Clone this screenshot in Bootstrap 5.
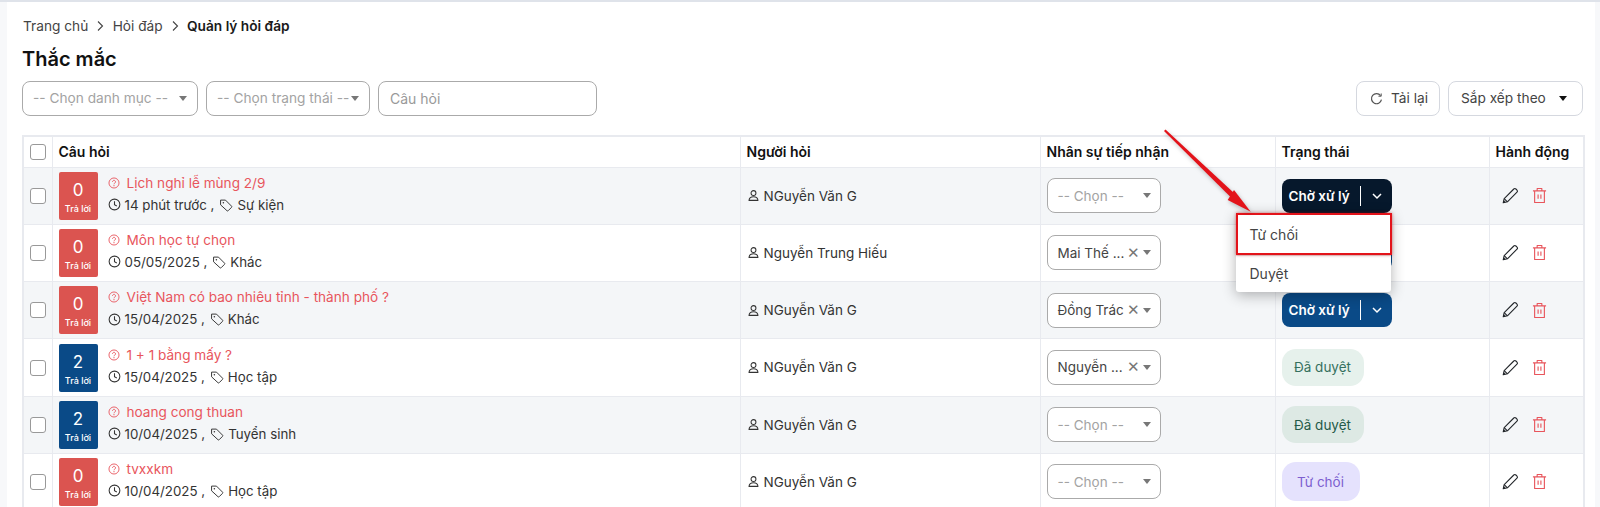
<!DOCTYPE html>
<html lang="vi">
<head>
    <meta charset="UTF-8">
    <title>Quản lý hỏi đáp</title>
    <link href="https://cdn.jsdelivr.net/npm/bootstrap@5.3.3/dist/css/bootstrap.min.css" rel="stylesheet">
    <style>
        html, body { height: 507px; overflow: hidden; }
        body { font-family: Inter, "Liberation Sans", sans-serif; font-size: 14px; color: #212529; background: #f7f8fa; border-top: 2px solid #dfe3ea; }
        .page-wrap { position: relative; margin: 0 5px 0 7px; padding: 14px 12px 0 15px; background: #fff; height: 505px; }
        .crumbs { font-size: 13.7px; line-height: 20px; color: #444; gap: 6.2px; padding-left: 1px; }
        .crumbs b { color: #1a1a1a; font-weight: 600; }
        .page-title { font-size: 20px; font-weight: 600; line-height: 28px; margin: 9px 0 8px; color: #111; }
        .fake-select { height: 35px; border: 1px solid #aaa; border-radius: 8px; background: #fff; color: #a3a3a3; padding: 0 10px; display: flex; align-items: center; justify-content: space-between; white-space: nowrap; font-size: 13.7px; }
        .fake-select i { width: 0; height: 0; border: 4px solid transparent; border-top: 5px solid #777; border-bottom: 0; flex: none; }
        .sel-cat { width: 176px; }
        .sel-status { width: 164px; }
        .q-input { width: 219px; height: 35px; border: 1px solid #aaa; border-radius: 8px; padding: 0 11px; font-size: 14px; }
        .q-input::placeholder { color: #999; }
        .tool-btn { height: 35px; border: 1px solid #d5d8df; border-radius: 8px; background: #fff; color: #444; font-size: 13.7px; display: flex; align-items: center; padding: 0 12px; white-space: nowrap; }
        .btn-reload { width: 84px; gap: 8px; padding: 0 0 0 13px; }
        .btn-sort { width: 135px; justify-content: space-between; padding-right: 15px; }
        .btn-sort i { width: 0; height: 0; border: 4px solid transparent; border-top: 5px solid #111; border-bottom: 0; }
        .qa-table { table-layout: fixed; width: 1561px; margin: 19px 0 0; border: 2px solid #e8eaef; --bs-table-striped-bg: #f4f6f8; --bs-table-striped-color: #212529; --bs-table-border-color: #e8eaef; }
        .qa-table th { height: 31px; padding: 0 6px; font-size: 14px; font-weight: 600; color: #111; vertical-align: middle; border-width: 1px; }
        .qa-table td { height: 57.3px; padding: 0 6px; vertical-align: middle; border-width: 1px; }
        .tick { width: 16px; height: 16px; border: 1px solid #999; border-radius: 3px; background: #fff; display: block; margin: 0 auto; appearance: none; }
        .count-box { width: 39px; height: 48px; border-radius: 2px; color: #fff; text-align: center; flex: none; padding-top: 6px; }
        .count-box span { display: block; font-size: 17px; line-height: 24px; }
        .count-box small { display: block; font-size: 9px; line-height: 13px; font-weight: 500; }
        .count-red { background: #db5450; }
        .count-blue { background: #0a4a87; }
        .q-text { padding-bottom: 4px; margin-left: 2px; }
        .q-title { color: #e8555c; line-height: 22px; gap: 7px; font-size: 13.6px; }
        .q-meta { color: #333; line-height: 22px; gap: 4px; font-size: 13.3px; }
        .q-meta svg + span + svg { margin-left: 1px; }
        .asker { gap: 4px; color: #333; font-size: 13.5px; }
        .pick { width: 114px; height: 35px; padding: 0 9px 0 10px; font-size: 13.5px; }
        .pick.picked { color: #444; }
        .pick .x { color: #777; font-size: 15px; margin-left: auto; margin-right: 3px; }
        .state-btn { width: 110px; height: 34px; border-radius: 8px; color: #fff; font-weight: 600; font-size: 13.5px; display: flex; align-items: center; padding: 0 0 0 7px; }
        .state-navy { background: #06182c; }
        .state-blue { background: #0a4a87; }
        .state-btn em { font-style: normal; width: 71px; white-space: nowrap; }
        .state-btn u { display: block; width: 1px; height: 20px; background: #fff; }
        .state-btn svg { margin-left: 10px; }
        .pill { display: inline-flex; align-items: center; justify-content: center; border-radius: 14px; font-size: 13.5px; height: 37px; }
        .pill-ok { width: 82px; background: #e6f1ec; color: #35705e; }
        .pill-ok.dim { background: #dde9e4; color: #245a49; }
        .pill-no { width: 78px; height: 39px; background: #e5e2fd; color: #7d5fd0; }
        .acts { gap: 13px; padding-left: 5px; }
        .state-menu { display: block; top: 34px; left: -46px; width: 155px; min-width: 0; padding: 0; margin: 0; border: 0; border-radius: 3px; box-shadow: 0 3px 14px rgba(0,0,0,.3); z-index: 5; }
        .state-menu .dropdown-item { height: 36px; display: flex; align-items: center; padding: 0 14px; font-size: 14px; color: #444; }
        .state-menu li:first-child .dropdown-item { height: 42px; padding-top: 2px; }
        .state-menu li + li { border-top: 1px solid #e4e4e4; }
        .mark-box { position: absolute; left: 1229px; top: 211px; width: 156px; height: 42px; border: 2px solid #e3131a; z-index: 6; box-shadow: 0 0 3px rgba(180,0,0,.5); }
        .mark-arrow { position: absolute; left: 1143px; top: 118px; z-index: 6; filter: drop-shadow(1px 2px 2px rgba(0,0,0,.25)); }
    </style>
</head>
<body>
    <svg width="0" height="0" class="position-absolute">
        <symbol id="i-help" viewBox="0 0 16 16"><circle cx="8" cy="8" r="6.7" fill="none" stroke="currentColor" stroke-width="1.2"/><path d="M6 6.4a2 2 0 1 1 3.1 1.7c-.7.4-1.1.8-1.1 1.6" fill="none" stroke="currentColor" stroke-width="1.2"/><circle cx="8" cy="11.6" r=".8" fill="currentColor"/></symbol>
        <symbol id="i-clock" viewBox="0 0 16 16"><circle cx="8" cy="8" r="6.6" fill="none" stroke="currentColor" stroke-width="1.3"/><path d="M8 4v4.3l2.8 1.5" fill="none" stroke="currentColor" stroke-width="1.3"/></symbol>
        <symbol id="i-tag" viewBox="0 0 16 16"><path d="M1.8 2.4h5.6l6.9 6.9a1 1 0 0 1 0 1.4l-3.8 3.8a1 1 0 0 1-1.4 0L1.8 7.8z" fill="none" stroke="currentColor" stroke-width="1.1" stroke-linejoin="round"/><circle cx="5" cy="5.5" r=".9" fill="currentColor"/></symbol>
        <symbol id="i-user" viewBox="0 0 16 16"><circle cx="8" cy="5" r="3" fill="none" stroke="currentColor" stroke-width="1.3"/><path d="M2.5 14c.3-3 2.4-4.4 5.5-4.4s5.200 1.400 5.500 4.400z" fill="none" stroke="currentColor" stroke-width="1.3" stroke-linejoin="round"/></symbol>
        <symbol id="i-pen" viewBox="0 0 18 18"><path d="M2.200 15.800l1-4.200L12.800 2a1.500 1.500 0 0 1 2.100 0l1.100 1.100a1.500 1.500 0 0 1 0 2.100L6.400 14.800z" fill="none" stroke="currentColor" stroke-width="1.100" stroke-linejoin="round"/><path d="M3.200 11.600l3.200 3.200" stroke="currentColor" stroke-width="1.100"/><path d="M2.200 15.800l.6-2.500 1.900 1.900z" fill="currentColor"/></symbol>
        <symbol id="i-trash" viewBox="0 0 16 18"><path d="M1 4h14M5.500 4V1.500h5V4M2.800 4v12.500h10.400V4" fill="none" stroke="currentColor" stroke-width="1.200" stroke-linejoin="round"/><path d="M6.500 8v4.500M9.500 8v4.500" stroke="currentColor" stroke-width="1.200"/></symbol>
        <symbol id="i-chev" viewBox="0 0 12 12"><path d="M2 4l4 4 4-4" fill="none" stroke="currentColor" stroke-width="1.500"/></symbol>
        <symbol id="i-next" viewBox="0 0 12 12"><path d="M4 1.500L8.500 6 4 10.500" fill="none" stroke="currentColor" stroke-width="1.100"/></symbol>
    </svg>

    <div class="page-wrap">
        <div class="crumbs d-flex align-items-center">
            <span>Trang chủ</span><svg width="12" height="12"><use href="#i-next"/></svg>
            <span>Hỏi đáp</span><svg width="12" height="12"><use href="#i-next"/></svg>
            <b>Quản lý hỏi đáp</b>
        </div>
        <h1 class="page-title">Thắc mắc</h1>

        <div class="d-flex justify-content-between">
            <div class="d-flex gap-2">
                <div class="fake-select sel-cat"><span>-- Chọn danh mục --</span><i></i></div>
                <div class="fake-select sel-status"><span>-- Chọn trạng thái --</span><i></i></div>
                <input class="q-input" placeholder="Câu hỏi">
            </div>
            <div class="d-flex gap-2">
                <button class="tool-btn btn-reload" type="button">
                    <svg width="13" height="13" viewBox="0 0 16 16" fill="none" stroke="#555" stroke-width="1.500"><path d="M13 4.500A6.200 6.200 0 1 0 14.100 9.500"/><path d="M13.800 1.800V5.200H10.400" stroke-width="1.200"/></svg>
                    Tải lại
                </button>
                <button class="tool-btn btn-sort" type="button">Sắp xếp theo <i></i></button>
            </div>
        </div>

        <table class="table table-bordered table-striped qa-table">
            <colgroup><col style="width:29px"><col style="width:688px"><col style="width:300px"><col style="width:235px"><col style="width:214px"><col style="width:95px"></colgroup>
            <thead>
                <tr>
                    <th><input type="checkbox" class="tick"></th>
                    <th>Câu hỏi</th>
                    <th>Người hỏi</th>
                    <th>Nhân sự tiếp nhận</th>
                    <th>Trạng thái</th>
                    <th>Hành động</th>
                </tr>
            </thead>
            <tbody id="rows"></tbody>
        </table>

        <div class="mark-box"></div>
        <svg class="mark-arrow" width="110" height="100" viewBox="0 0 110 100">
            <path d="M14 11L15.500 9.500 84 73 80.500 77z" fill="#e3131a"/>
            <path d="M100.700 91.700L77.700 80 84 70z" fill="#e3131a"/>
        </svg>
    </div>

    <script src="https://cdn.jsdelivr.net/npm/bootstrap@5.3.3/dist/js/bootstrap.bundle.min.js"></script>
    <script>
        const data = [
            { n: 0, q: 'Lịch nghỉ lễ mùng 2/9', t: '14 phút trước', c: 'Sự kiện', a: 'NGuyễn Văn G', p: '', s: 'navy' },
            { n: 0, q: 'Môn học tự chọn', t: '05/05/2025', c: 'Khác', a: 'Nguyễn Trung Hiếu', p: 'Mai Thế ...', s: 'hidden' },
            { n: 0, q: 'Việt Nam có bao nhiêu tỉnh - thành phố ?', t: '15/04/2025', c: 'Khác', a: 'NGuyễn Văn G', p: 'Đồng Trác', s: 'blue' },
            { n: 2, q: '1 + 1 bằng mấy ?', t: '15/04/2025', c: 'Học tập', a: 'NGuyễn Văn G', p: 'Nguyễn ...', s: 'ok' },
            { n: 2, q: 'hoang cong thuan', t: '10/04/2025', c: 'Tuyển sinh', a: 'NGuyễn Văn G', p: '', s: 'okdim' },
            { n: 0, q: 'tvxxkm', t: '10/04/2025', c: 'Học tập', a: 'NGuyễn Văn G', p: '', s: 'no' }
        ]
        const icon = (id, w, h) => `<svg width="${w}" height="${h || w}" class="flex-shrink-0"><use href="#${id}"/></svg>`
        const stateBtn = (cls, menu) => `<div class="position-relative d-inline-block align-middle">
            <div class="state-btn ${cls}"><em>Chờ xử lý</em><u></u>${icon('i-chev', 12)}</div>${menu}</div>`
        const menu = `<ul class="dropdown-menu state-menu">
            <li><a class="dropdown-item" href="#">Từ chối</a></li>
            <li><a class="dropdown-item" href="#">Duyệt</a></li></ul>`
        const stateCell = {
            navy: stateBtn('state-navy', menu),
            blue: stateBtn('state-blue', ''),
            hidden: stateBtn('state-blue', ''),
            ok: '<span class="pill pill-ok">Đã duyệt</span>',
            okdim: '<span class="pill pill-ok dim">Đã duyệt</span>',
            no: '<span class="pill pill-no">Từ chối</span>'
        }
        document.getElementById('rows').innerHTML = data.map(r => `
            <tr>
                <td><input type="checkbox" class="tick"></td>
                <td><div class="d-flex gap-2 align-items-center">
                    <div class="count-box ${r.n ? 'count-blue' : 'count-red'}"><span>${r.n}</span><small>Trả lời</small></div>
                    <div class="q-text">
                        <div class="q-title d-flex align-items-center">${icon('i-help', 12)}<span>${r.q}</span></div>
                        <div class="q-meta d-flex align-items-center">${icon('i-clock', 13)}<span>${r.t} ,</span>${icon('i-tag', 14)}<span>${r.c}</span></div>
                    </div>
                </div></td>
                <td><div class="asker d-flex align-items-center">${icon('i-user', 13)}${r.a}</div></td>
                <td><div class="fake-select pick ${r.p ? 'picked' : ''}"><span>${r.p || '-- Chọn --'}</span>${r.p ? '<span class="x">✕</span>' : ''}<i></i></div></td>
                <td>${stateCell[r.s]}</td>
                <td><div class="acts d-flex align-items-center"><span class="text-dark d-flex">${icon('i-pen', 18)}</span><span class="q-title d-flex">${icon('i-trash', 15, 17)}</span></div></td>
            </tr>`).join('')
    </script>
</body>
</html>
